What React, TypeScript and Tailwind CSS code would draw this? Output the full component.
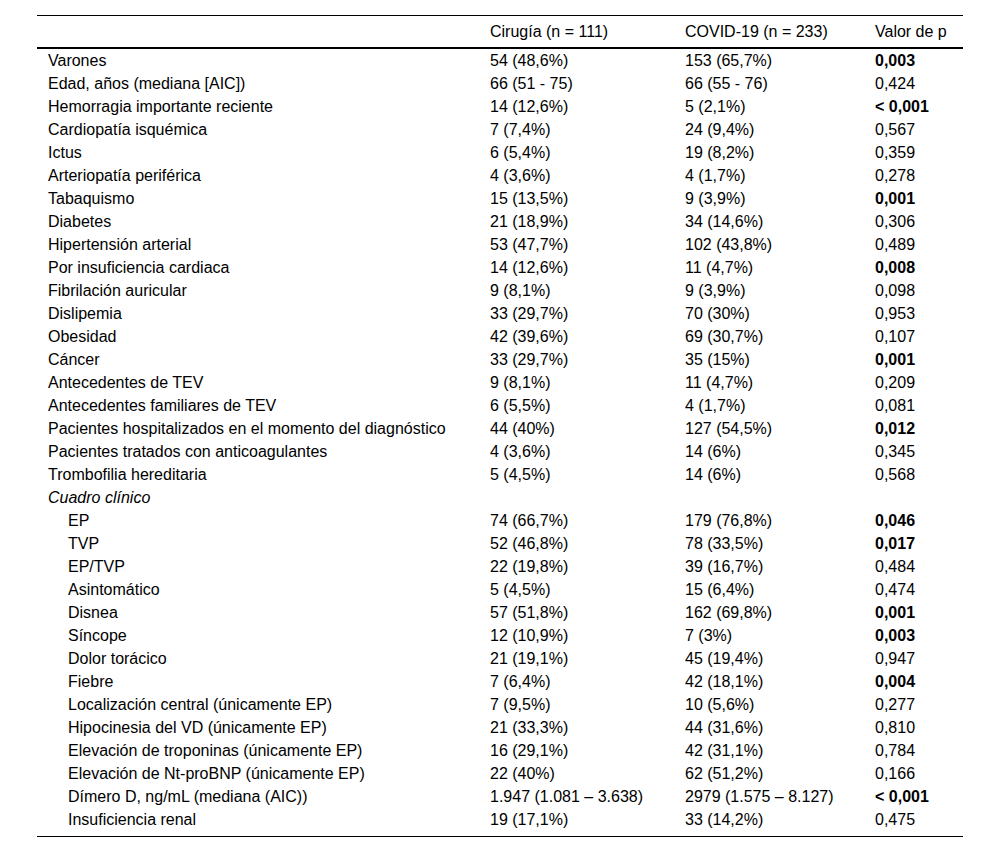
import React from "react";

type Row = { l: string; a: string; b: string; p: string; bold?: boolean; kind?: "section" | "indent" };

const rows: Row[] = [
  { l: "Varones", a: "54 (48,6%)", b: "153 (65,7%)", p: "0,003", bold: true },
  { l: "Edad, años (mediana [AIC])", a: "66 (51 - 75)", b: "66 (55 - 76)", p: "0,424" },
  { l: "Hemorragia importante reciente", a: "14 (12,6%)", b: "5 (2,1%)", p: "< 0,001", bold: true },
  { l: "Cardiopatía isquémica", a: "7 (7,4%)", b: "24 (9,4%)", p: "0,567" },
  { l: "Ictus", a: "6 (5,4%)", b: "19 (8,2%)", p: "0,359" },
  { l: "Arteriopatía periférica", a: "4 (3,6%)", b: "4 (1,7%)", p: "0,278" },
  { l: "Tabaquismo", a: "15 (13,5%)", b: "9 (3,9%)", p: "0,001", bold: true },
  { l: "Diabetes", a: "21 (18,9%)", b: "34 (14,6%)", p: "0,306" },
  { l: "Hipertensión arterial", a: "53 (47,7%)", b: "102 (43,8%)", p: "0,489" },
  { l: "Por insuficiencia cardiaca", a: "14 (12,6%)", b: "11 (4,7%)", p: "0,008", bold: true },
  { l: "Fibrilación auricular", a: "9 (8,1%)", b: "9 (3,9%)", p: "0,098" },
  { l: "Dislipemia", a: "33 (29,7%)", b: "70 (30%)", p: "0,953" },
  { l: "Obesidad", a: "42 (39,6%)", b: "69 (30,7%)", p: "0,107" },
  { l: "Cáncer", a: "33 (29,7%)", b: "35 (15%)", p: "0,001", bold: true },
  { l: "Antecedentes de TEV", a: "9 (8,1%)", b: "11 (4,7%)", p: "0,209" },
  { l: "Antecedentes familiares de TEV", a: "6 (5,5%)", b: "4 (1,7%)", p: "0,081" },
  { l: "Pacientes hospitalizados en el momento del diagnóstico", a: "44 (40%)", b: "127 (54,5%)", p: "0,012", bold: true },
  { l: "Pacientes tratados con anticoagulantes", a: "4 (3,6%)", b: "14 (6%)", p: "0,345" },
  { l: "Trombofilia hereditaria", a: "5 (4,5%)", b: "14 (6%)", p: "0,568" },
  { l: "Cuadro clínico", a: "", b: "", p: "", kind: "section" },
  { l: "EP", a: "74 (66,7%)", b: "179 (76,8%)", p: "0,046", bold: true, kind: "indent" },
  { l: "TVP", a: "52 (46,8%)", b: "78 (33,5%)", p: "0,017", bold: true, kind: "indent" },
  { l: "EP/TVP", a: "22 (19,8%)", b: "39 (16,7%)", p: "0,484", kind: "indent" },
  { l: "Asintomático", a: "5 (4,5%)", b: "15 (6,4%)", p: "0,474", kind: "indent" },
  { l: "Disnea", a: "57 (51,8%)", b: "162 (69,8%)", p: "0,001", bold: true, kind: "indent" },
  { l: "Síncope", a: "12 (10,9%)", b: "7 (3%)", p: "0,003", bold: true, kind: "indent" },
  { l: "Dolor torácico", a: "21 (19,1%)", b: "45 (19,4%)", p: "0,947", kind: "indent" },
  { l: "Fiebre", a: "7 (6,4%)", b: "42 (18,1%)", p: "0,004", bold: true, kind: "indent" },
  { l: "Localización central (únicamente EP)", a: "7 (9,5%)", b: "10 (5,6%)", p: "0,277", kind: "indent" },
  { l: "Hipocinesia del VD (únicamente EP)", a: "21 (33,3%)", b: "44 (31,6%)", p: "0,810", kind: "indent" },
  { l: "Elevación de troponinas (únicamente EP)", a: "16 (29,1%)", b: "42 (31,1%)", p: "0,784", kind: "indent" },
  { l: "Elevación de Nt-proBNP (únicamente EP)", a: "22 (40%)", b: "62 (51,2%)", p: "0,166", kind: "indent" },
  { l: "Dímero D, ng/mL (mediana (AIC))", a: "1.947 (1.081 – 3.638)", b: "2979 (1.575 – 8.127)", p: "< 0,001", bold: true, kind: "indent" },
  { l: "Insuficiencia renal", a: "19 (17,1%)", b: "33 (14,2%)", p: "0,475", kind: "indent" },
];

const grid = "grid grid-cols-[443px_195px_190px_98px]";

export default function App() {
  return (
    <div className="min-h-[852px] w-[1000px] bg-white font-['Liberation_Sans',Arial,sans-serif] text-[16px] text-black">
      <div className="ml-[37px] w-[926px] pt-[15px]">
        <div className={`${grid} h-[34px] items-center border-t border-b-2 border-black`}>
          <div className="pl-[11px]"></div>
          <div className="pl-[10px]">Cirugía (n = 111)</div>
          <div className="pl-[10px]">COVID-19 (n = 233)</div>
          <div className="pl-[10px]">Valor de p</div>
        </div>
        <div className="border-b border-black pb-[5px]">
          {rows.map((r, i) => (
            <div key={i} className={`${grid} h-[23px] items-center whitespace-nowrap`}>
              <div className={r.kind === "indent" ? "pl-[31px]" : r.kind === "section" ? "pl-[11px] italic" : "pl-[11px]"}>{r.l}</div>
              <div className="pl-[10px]">{r.a}</div>
              <div className="pl-[10px]">{r.b}</div>
              <div className={r.bold ? "pl-[10px] font-bold" : "pl-[10px]"}>{r.p}</div>
            </div>
          ))}
        </div>
      </div>
    </div>
  );
}
